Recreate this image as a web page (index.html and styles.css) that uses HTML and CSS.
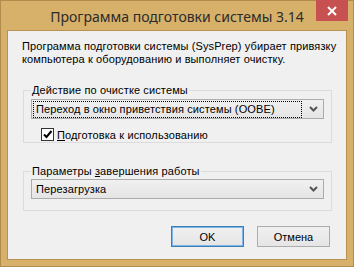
FILE: index.html
```html
<!DOCTYPE html>
<html lang="ru">

<head>
    <meta charset="UTF-8">
    <title>Программа подготовки системы 3.14</title>
    <link rel="stylesheet" href="styles.css">
</head>

<body>
    <div class="window">
        <div class="titlebar">
            <span class="title">Программа подготовки системы 3.14</span>
            <div class="close">
                <svg width="10" height="10" viewBox="0 0 10 10">
                    <path d="M1 1 L9 9 M9 1 L1 9" stroke="#fff" stroke-width="2" fill="none"/>
                </svg>
            </div>
        </div>
        <div class="client">
            <p class="intro">Программа подготовки системы (SysPrep) убирает привязку<br>компьютера к оборудованию и выполняет очистку.</p>

            <fieldset class="group first">
                <legend><u>Д</u>ействие по очистке системы</legend>
                <div class="combo focused">
                    <span class="value">Переход в окно приветствия системы (OOBE)</span>
                    <span class="arrow">
                        <svg width="9" height="6" viewBox="0 0 9 6">
                            <path d="M1 1 L4.5 4.5 L8 1" stroke="#555" stroke-width="2" fill="none"/>
                        </svg>
                    </span>
                </div>
                <label class="check">
                    <span class="box">
                        <svg width="11" height="11" viewBox="0 0 11 11">
                            <path d="M2 5.5 L4.5 8 L9.5 2" stroke="#000" stroke-width="2" fill="none"/>
                        </svg>
                    </span>
                    <span><u>П</u>одготовка к использованию</span>
                </label>
            </fieldset>

            <fieldset class="group second">
                <legend>Параметры <u>з</u>авершения работы</legend>
                <div class="combo">
                    <span class="value">Перезагрузка</span>
                    <span class="arrow">
                        <svg width="9" height="6" viewBox="0 0 9 6">
                            <path d="M1 1 L4.5 4.5 L8 1" stroke="#555" stroke-width="2" fill="none"/>
                        </svg>
                    </span>
                </div>
            </fieldset>

            <div class="buttons">
                <button class="btn default">OK</button>
                <button class="btn">Отмена</button>
            </div>
        </div>
    </div>
</body>

</html>
```

FILE: styles.css
```css
body {
    margin: 0;
    padding: 0;
    font-family: "Liberation Sans", Arial, sans-serif;
    font-size: 11px;
    letter-spacing: 0.12px;
    color: #000;
}

.window {
    width: 354px;
    height: 267px;
    box-sizing: border-box;
    border: 1px solid #b08d4c;
    background-color: #d7b06a;
    display: flex;
    flex-direction: column;
    position: relative;
}

.titlebar {
    height: 29px;
    display: flex;
    align-items: center;
    justify-content: center;
}

.title {
    font-family: "Noto Sans", sans-serif;
    font-size: 14px;
    letter-spacing: 0;
    color: #2b2b2b;
    margin-top: 1px;
}

.close {
    position: absolute;
    top: -1px;
    right: 5px;
    width: 32px;
    height: 21px;
    background-color: #c75050;
    display: flex;
    align-items: center;
    justify-content: center;
}

.client {
    margin: 0 6px 6px;
    flex: 1;
    border: 1px solid #b8934f;
    background-color: #f0f0f0;
    padding: 9px 14px 0 15px;
}

.intro {
    margin: 0 0 0 -1px;
    line-height: 13px;
    white-space: nowrap;
}

.group {
    margin: 0;
    border: 1px solid #dcdcdc;
    padding: 0 7px 1px;
}

.group.first {
    margin-top: 18px;
}

.group.second {
    margin-top: 22px;
    padding-bottom: 11px;
}

.group legend {
    padding: 0 1px;
    line-height: 13px;
}

.combo {
    margin-top: 2px;
    height: 20px;
    box-sizing: border-box;
    border: 1px solid #acacac;
    background: linear-gradient(#f0f0f0, #e5e5e5);
    display: flex;
    align-items: center;
}

.group.second .combo {
    margin-top: 1px;
}

.combo .value {
    flex: 1;
    margin: 0 1px;
    padding: 1px 2px;
    line-height: 13px;
    border: 1px dotted transparent;
}

.combo.focused .value {
    border-color: #000;
}

.combo .arrow {
    width: 20px;
    display: flex;
    justify-content: center;
}

.check {
    display: flex;
    align-items: center;
    margin: 9px 0 0 10px;
}

.check .box {
    width: 11px;
    height: 11px;
    border: 1px solid #333;
    background: #fff;
    margin-right: 3px;
    display: flex;
}

.buttons {
    display: flex;
    justify-content: flex-end;
    gap: 13px;
    margin: 15px 2px 0 0;
}

.btn {
    width: 73px;
    height: 21px;
    border: 1px solid #acacac;
    background: linear-gradient(#f0f0f0, #e5e5e5);
    font-family: "Liberation Sans", Arial, sans-serif;
    font-size: 11px;
    color: #000;
    padding: 0;
}

.btn.default {
    border-color: #3c7fb1;
    box-shadow: inset 0 0 0 1px #7eb4ea;
}
```
